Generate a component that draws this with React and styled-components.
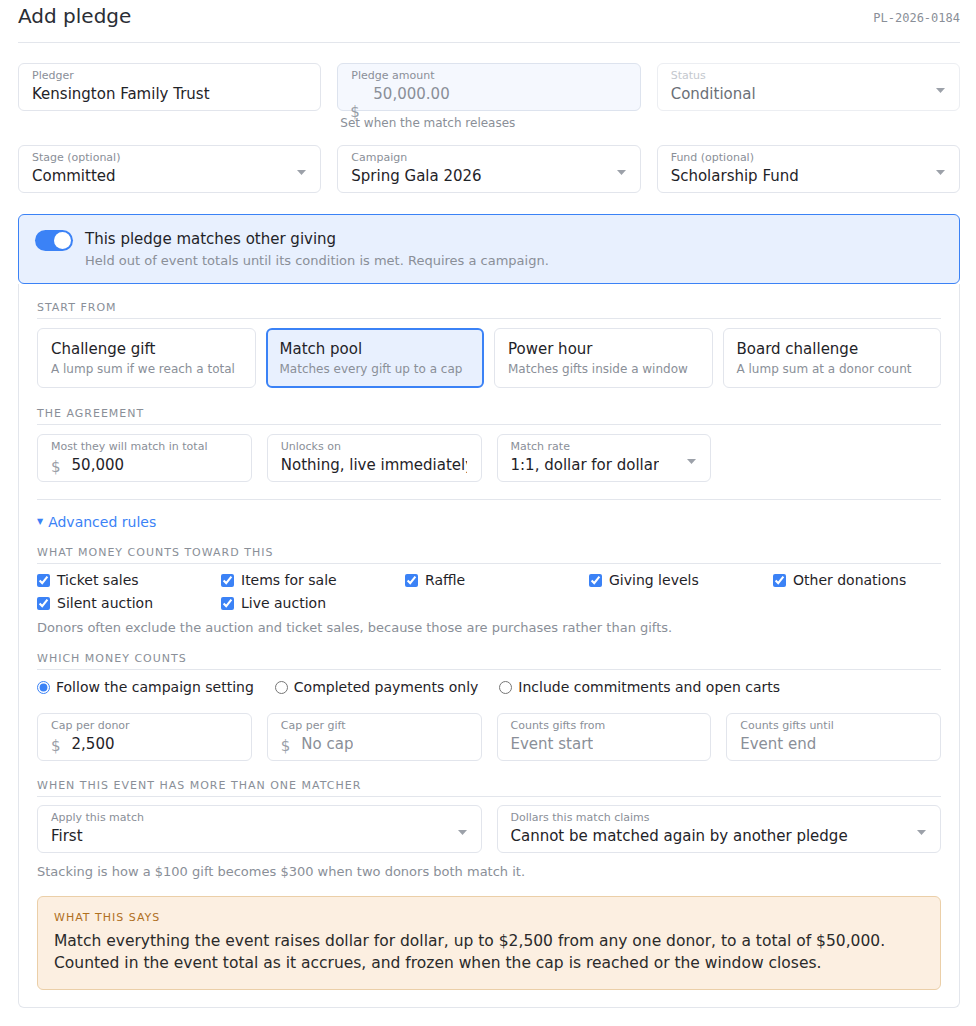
import styled, { createGlobalStyle } from "styled-components";

const GlobalStyle = createGlobalStyle`
  body {
    margin: 0;
    background: #ffffff;
    font-family: "DejaVu Sans", "Noto Sans", sans-serif;
    color: #1f2328;
  }
  * { box-sizing: border-box; }
`;

// 페이지 래퍼
const Page = styled.div`
  width: 960px;
  padding: 0 0 18px 18px;
`;

// 상단 제목줄
const Header = styled.div`
  height: 43px;
  display: flex;
  align-items: center;
  justify-content: space-between;
  padding-bottom: 11px;
  border-bottom: 1px solid #e3e6ec;
`;

const Title = styled.h1`
  margin: 0;
  font-size: 20px;
  font-weight: 400;
  line-height: 24px;
  color: #2a2e35;
`;

const Code = styled.span`
  font-family: "DejaVu Sans Mono", "Liberation Mono", monospace;
  font-size: 12px;
  color: #8a8f98;
  margin-top: 4px;
`;

const Grid = styled.div`
  display: grid;
  grid-template-columns: repeat(${({ $cols }) => $cols}, minmax(0, 1fr));
  column-gap: ${({ $gap }) => $gap}px;
  align-items: start;
  margin-top: ${({ $top }) => $top || 0}px;
`;

// 입력 박스
const FieldBox = styled.div`
  position: relative;
  height: 48px;
  display: flex;
  align-items: center;
  border: 1px solid ${({ $tone }) => ($tone === "locked" ? "#dde3ee" : $tone === "off" ? "#eceef2" : "#e2e5ec")};
  background: ${({ $tone }) => ($tone === "locked" ? "#f5f8fe" : "#ffffff")};
  border-radius: 6px;
  padding: 5px 14px 0 13px;
`;

const FieldMain = styled.div`
  flex: 1;
  min-width: 0;
  align-self: stretch;
`;

const FieldLabel = styled.div`
  font-size: 11px;
  line-height: 14px;
  white-space: nowrap;
  color: ${({ $tone }) => ($tone === "off" ? "#c4c8ce" : "#8a8f98")};
`;

const FieldRow = styled.div`
  display: flex;
  align-items: baseline;
  margin-top: 1px;
  padding-left: ${({ $indent }) => $indent || 0}px;
`;

const Prefix = styled.span`
  flex: none;
  font-size: 15px;
  color: #9aa0a8;
  margin-right: 11px;
  position: relative;
  top: 2px;
`;

// 박스 아래로 밀려난 통화 기호
const StrayPrefix = styled.span`
  position: absolute;
  left: 12px;
  top: 40px;
  font-size: 15px;
  line-height: 16px;
  color: #9aa0a8;
`;

const FieldValue = styled.div`
  font-size: 15px;
  line-height: 20px;
  white-space: nowrap;
  overflow: hidden;
  color: ${({ $tone }) =>
    $tone === "off" ? "#6b7077" : $tone === "locked" || $tone === "empty" ? "#8a8f98" : "#1f2328"};
`;

const Caret = styled.svg`
  flex: none;
  width: 9px;
  height: 5px;
  margin-top: 2px;
  margin-left: 8px;
  fill: #9ca1a9;
`;

const Field = ({ label, value, prefix, select, tone, indent, stray }) => (
  <FieldBox $tone={tone}>
    <FieldMain>
      <FieldLabel $tone={tone}>{label}</FieldLabel>
      <FieldRow $indent={indent}>
        {prefix && <Prefix>{prefix}</Prefix>}
        <FieldValue $tone={tone}>{value}</FieldValue>
      </FieldRow>
    </FieldMain>
    {select && (
      <Caret viewBox="0 0 9 5">
        <path d="M0 0h9L4.5 5z" />
      </Caret>
    )}
    {stray && <StrayPrefix>{stray}</StrayPrefix>}
  </FieldBox>
);

const Hint = styled.div`
  font-size: ${({ $size }) => $size || 13}px;
  line-height: 16px;
  color: #8a8f98;
  margin-top: ${({ $top }) => $top || 0}px;
  padding-left: ${({ $left }) => $left || 0}px;
`;

// 매칭 패널
const MatchHead = styled.div`
  margin-top: 21px;
  height: 70px;
  display: flex;
  align-items: flex-start;
  gap: 12px;
  padding: 14px 16px 0 16px;
  background: #e8f0fe;
  border: 1px solid #3b82f6;
  border-radius: 6px;
`;

const Toggle = styled.div`
  flex: none;
  width: 38px;
  height: 21px;
  margin-top: 1px;
  border-radius: 11px;
  background: #3b82f6;
  display: flex;
  justify-content: flex-end;
  align-items: center;
  padding-right: 2px;
  &::after {
    content: "";
    width: 17px;
    height: 17px;
    border-radius: 50%;
    background: #ffffff;
  }
`;

const HeadTitle = styled.div`
  font-size: 15px;
  line-height: 20px;
  color: #1f2328;
`;

const HeadSub = styled.div`
  font-size: 13px;
  line-height: 18px;
  margin-top: 3px;
  color: #8a8f98;
`;

const MatchBody = styled.div`
  border: 1px solid #e3e6ec;
  border-top: none;
  border-radius: 0 0 6px 6px;
  padding: 17px 18px 17px 18px;
`;

const SectionTitle = styled.div`
  margin-top: ${({ $top }) => $top || 0}px;
  font-size: 11px;
  line-height: 14px;
  letter-spacing: 1px;
  text-transform: uppercase;
  color: #8a8f98;
  padding-bottom: 3px;
  border-bottom: 1px solid #e3e6ec;
`;

const Cards = styled.div`
  display: grid;
  grid-template-columns: repeat(4, minmax(0, 1fr));
  gap: 10px;
  margin-top: 9px;
`;

const Card = styled.div`
  height: 60px;
  border-radius: 6px;
  border: ${({ $on }) => ($on ? "2px solid #3b82f6" : "1px solid #e2e5ec")};
  background: ${({ $on }) => ($on ? "#e8f0fe" : "#ffffff")};
  padding: ${({ $on }) => ($on ? "9px 12px" : "10px 13px")};
`;

const CardTitle = styled.div`
  font-size: 15px;
  line-height: 20px;
  color: #1f2328;
`;

const CardText = styled.div`
  font-size: 12px;
  line-height: 16px;
  margin-top: 2px;
  white-space: nowrap;
  color: #8a8f98;
`;

const Divider = styled.div`
  height: 1px;
  background: #e3e6ec;
  margin-top: 17px;
`;

const Disclosure = styled.div`
  margin-top: 13px;
  font-size: 14px;
  line-height: 18px;
  color: #3b82f6;
  display: flex;
  align-items: center;
  gap: 5px;
  & span {
    font-size: 8px;
  }
`;

const Checks = styled.div`
  display: grid;
  grid-template-columns: repeat(5, 167px);
  column-gap: 17px;
  row-gap: 5px;
  margin-top: 7px;
`;

const Option = styled.label`
  display: flex;
  align-items: center;
  gap: ${({ $gap }) => $gap || 7}px;
  font-size: 14px;
  line-height: 18px;
  color: #1f2328;
  & input {
    margin: 0;
    width: 13px;
    height: 13px;
    accent-color: #3b82f6;
  }
`;

const Radios = styled.div`
  display: flex;
  gap: 21px;
  margin-top: 8px;
`;

const Summary = styled.div`
  margin-top: 16px;
  background: #fcefe1;
  border: 1px solid #ebcfa8;
  border-radius: 6px;
  padding: 14px 16px 15px 16px;
`;

const SummaryTitle = styled.div`
  font-size: 11px;
  line-height: 14px;
  letter-spacing: 1px;
  color: #b0701f;
`;

const SummaryText = styled.div`
  font-size: 15.5px;
  line-height: 22px;
  margin-top: 5px;
  color: #2a2a2a;
`;

const starters = [
  { title: "Challenge gift", text: "A lump sum if we reach a total" },
  { title: "Match pool", text: "Matches every gift up to a cap", on: true },
  { title: "Power hour", text: "Matches gifts inside a window" },
  { title: "Board challenge", text: "A lump sum at a donor count" },
];

const sources = [
  "Ticket sales",
  "Items for sale",
  "Raffle",
  "Giving levels",
  "Other donations",
  "Silent auction",
  "Live auction",
];

const modes = [
  "Follow the campaign setting",
  "Completed payments only",
  "Include commitments and open carts",
];

const App = () => {
  return (
    <Page>
      <GlobalStyle />
      <Header>
        <Title>Add pledge</Title>
        <Code>PL-2026-0184</Code>
      </Header>

      <Grid $cols={3} $gap={16} $top={20}>
        <Field label="Pledger" value="Kensington Family Trust" />
        <div>
          <Field label="Pledge amount" value="50,000.00" tone="locked" indent={22} stray="$" />
          <Hint $top={4} $left={3} $size={12}>Set when the match releases</Hint>
        </div>
        <Field label="Status" value="Conditional" tone="off" select />
      </Grid>

      <Grid $cols={3} $gap={16} $top={14}>
        <Field label="Stage (optional)" value="Committed" select />
        <Field label="Campaign" value="Spring Gala 2026" select />
        <Field label="Fund (optional)" value="Scholarship Fund" select />
      </Grid>

      <MatchHead>
        <Toggle />
        <div>
          <HeadTitle>This pledge matches other giving</HeadTitle>
          <HeadSub>Held out of event totals until its condition is met. Requires a campaign.</HeadSub>
        </div>
      </MatchHead>

      <MatchBody>
        <SectionTitle>Start from</SectionTitle>
        <Cards>
          {starters.map((s) => (
            <Card key={s.title} $on={s.on}>
              <CardTitle>{s.title}</CardTitle>
              <CardText>{s.text}</CardText>
            </Card>
          ))}
        </Cards>

        <SectionTitle $top={19}>The agreement</SectionTitle>
        <Grid $cols={4} $gap={15} $top={9}>
          <Field label="Most they will match in total" value="50,000" prefix="$" />
          <Field label="Unlocks on" value="Nothing, live immediately" />
          <Field label="Match rate" value="1:1, dollar for dollar" select />
        </Grid>

        <Divider />
        <Disclosure>
          <span>▼</span>Advanced rules
        </Disclosure>

        <SectionTitle $top={15}>What money counts toward this</SectionTitle>
        <Checks>
          {sources.map((s) => (
            <Option key={s}>
              <input type="checkbox" defaultChecked />
              {s}
            </Option>
          ))}
        </Checks>
        <Hint $top={8}>
          Donors often exclude the auction and ticket sales, because those are purchases rather than gifts.
        </Hint>

        <SectionTitle $top={16}>Which money counts</SectionTitle>
        <Radios>
          {modes.map((m, i) => (
            <Option key={m} $gap={6}>
              <input type="radio" name="counts" defaultChecked={i === 0} />
              {m}
            </Option>
          ))}
        </Radios>

        <Grid $cols={4} $gap={15} $top={17}>
          <Field label="Cap per donor" value="2,500" prefix="$" />
          <Field label="Cap per gift" value="No cap" prefix="$" tone="empty" />
          <Field label="Counts gifts from" value="Event start" tone="empty" />
          <Field label="Counts gifts until" value="Event end" tone="empty" />
        </Grid>

        <SectionTitle $top={18}>When this event has more than one matcher</SectionTitle>
        <Grid $cols={2} $gap={15} $top={8}>
          <Field label="Apply this match" value="First" select />
          <Field label="Dollars this match claims" value="Cannot be matched again by another pledge" select />
        </Grid>
        <Hint $top={11}>Stacking is how a $100 gift becomes $300 when two donors both match it.</Hint>

        <Summary>
          <SummaryTitle>WHAT THIS SAYS</SummaryTitle>
          <SummaryText>
            Match everything the event raises dollar for dollar, up to $2,500 from any one donor, to a total of $50,000.
            <br />
            Counted in the event total as it accrues, and frozen when the cap is reached or the window closes.
          </SummaryText>
        </Summary>
      </MatchBody>
    </Page>
  );
};

export default App;
